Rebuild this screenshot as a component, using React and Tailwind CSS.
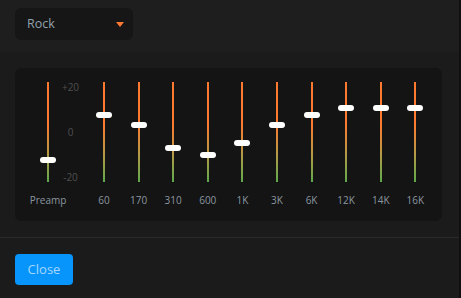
const BANDS = [
  { label: '60', top: 30 },
  { label: '170', top: 40 },
  { label: '310', top: 63 },
  { label: '600', top: 70 },
  { label: '1K', top: 58 },
  { label: '3K', top: 40 },
  { label: '6K', top: 30 },
  { label: '12K', top: 23 },
  { label: '14K', top: 23 },
  { label: '16K', top: 23 },
];

const Track = ({ top }) => (
  <div className="relative h-[100px] w-[2px] bg-[linear-gradient(to_bottom,#ff7a30_0%,#ff7a30_42%,#b59a45_72%,#5fa84c_100%)]">
    <div
      className="absolute left-1/2 -translate-x-1/2 w-[16px] h-[6px] rounded-full bg-white"
      style={{ top }}
    />
  </div>
);

const BandColumn = ({ label, top }) => (
  <div className="w-[34.6px] flex flex-col items-center">
    <Track top={top} />
    <span className="mt-[11px] h-[14px] leading-[14px] text-[10px] text-[#8b96a0] whitespace-nowrap">
      {label}
    </span>
  </div>
);

const PresetSelect = () => (
  <div className="w-[118px] h-[32px] rounded-md bg-[#161616] flex items-center justify-between pl-3 pr-[8px]">
    <span className="text-[12.5px] text-[#93a1ad]">Rock</span>
    <svg width="8" height="5" viewBox="0 0 8 5" className="mr-[1px]">
      <path d="M0 0 L8 0 L4 5 Z" fill="#ff7a30" />
    </svg>
  </div>
);

const Equalizer = () => (
  <div className="bg-[#141414] rounded-md pl-[19px] pt-[14px] pb-[14px] flex">
    {/* Preamp */}
    <div className="w-[28px] flex flex-col items-center">
      <Track top={75} />
      <span className="mt-[11px] h-[14px] leading-[14px] text-[10px] text-[#8b96a0] whitespace-nowrap">
        Preamp
      </span>
    </div>

    {/* Scale */}
    <div className="w-[17px] h-[100px] flex flex-col justify-between items-center text-[10px] leading-[10px] text-[#4f4f4f]">
      <span>+20</span>
      <span>0</span>
      <span>-20</span>
    </div>

    <div className="flex ml-[7.7px]">
      {BANDS.map((band) => (
        <BandColumn key={band.label} label={band.label} top={band.top} />
      ))}
    </div>
  </div>
);

export default function App() {
  return (
    <div className="w-[461px] h-[298px] flex font-['Open_Sans',sans-serif] overflow-hidden">
      <div className="flex-1 flex flex-col bg-[#1b1b1b]">
        <div className="bg-[#1e1e1e] px-[15px] pt-[8px] pb-[12px]">
          <PresetSelect />
        </div>

        <div className="pl-[15px] pr-[17px] pt-[16px] pb-[16px] border-b border-[#2a2a2a]">
          <Equalizer />
        </div>

        <div className="flex-1 px-[15px] pt-[16px]">
          <button className="w-[58px] h-[31px] rounded bg-[#0795fb] text-[13px] text-[#a6d6ff]">
            Close
          </button>
        </div>
      </div>
      <div className="w-[2px] bg-[#101010]" />
    </div>
  );
}
